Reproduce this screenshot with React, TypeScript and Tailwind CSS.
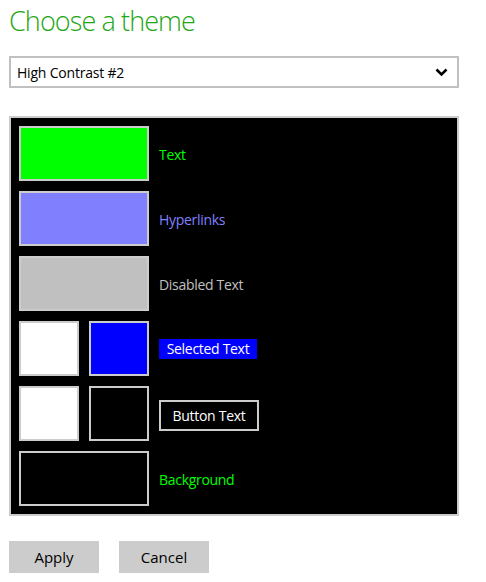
import React from "react";

const font = { fontFamily: '"Open Sans", "Noto Sans", sans-serif' };

export default function App() {
  return (
    <div className="w-[486px] h-[582px] bg-white relative" style={font}>
      <h1 className="absolute left-[9px] top-[3px] text-[27px] font-light text-[#1ea614] leading-[36px] tracking-[-0.9px]">
        Choose a theme
      </h1>

      <div className="px-[9px] pt-[56px]">
        {/* Dropdown */}
        <div className="w-[450px] h-[32px] border-2 border-[#c0c0c0] flex items-center justify-between pl-[6px] pr-[9px]">
          <span className="text-[14px] text-black tracking-[-0.2px]">High Contrast #2</span>
          <svg width="13" height="9" viewBox="0 0 13 9">
            <path d="M1.5 1.5 L6.5 6.5 L11.5 1.5" fill="none" stroke="#000" strokeWidth="2.6" />
          </svg>
        </div>

        {/* Preview panel */}
        <div className="mt-[28px] w-[450px] h-[400px] border-2 border-[#cccccc] bg-black p-[8px] flex flex-col gap-[10px] text-[14px] tracking-[-0.3px]">
          <div className="flex items-center h-[55px]">
            <div className="w-[130px] h-[55px] border-2 border-[#cccccc] bg-[#00ff00]" />
            <span className="ml-[10px] pt-[2px] text-[#00ff00]">Text</span>
          </div>
          <div className="flex items-center h-[55px]">
            <div className="w-[130px] h-[55px] border-2 border-[#cccccc] bg-[#8080ff]" />
            <span className="ml-[10px] pt-[2px] text-[#8080ff]">Hyperlinks</span>
          </div>
          <div className="flex items-center h-[55px]">
            <div className="w-[130px] h-[55px] border-2 border-[#cccccc] bg-[#c0c0c0]" />
            <span className="ml-[10px] pt-[2px] text-[#c0c0c0]">Disabled Text</span>
          </div>
          <div className="flex items-center h-[55px]">
            <div className="w-[60px] h-[55px] border-2 border-[#cccccc] bg-white" />
            <div className="ml-[10px] w-[60px] h-[55px] border-2 border-[#cccccc] bg-[#0000ff]" />
            <span className="ml-[10px] w-[98px] h-[20px] bg-[#0000ff] text-white leading-[20px] text-center">
              Selected Text
            </span>
          </div>
          <div className="flex items-center h-[55px]">
            <div className="w-[60px] h-[55px] border-2 border-[#cccccc] bg-white" />
            <div className="ml-[10px] w-[60px] h-[55px] border-2 border-[#cccccc] bg-black" />
            <span className="ml-[10px] mt-[3px] w-[100px] h-[31px] border-2 border-[#cccccc] text-white flex items-center justify-center">
              Button Text
            </span>
          </div>
          <div className="flex items-center h-[55px]">
            <div className="w-[130px] h-[55px] border-2 border-[#cccccc] bg-black" />
            <span className="ml-[10px] pt-[2px] text-[#00ff00]">Background</span>
          </div>
        </div>

        {/* Buttons */}
        <div className="mt-[25px] flex gap-[20px]">
          <button className="w-[90px] h-[32px] bg-[#cccccc] text-[15px] font-medium text-black">
            Apply
          </button>
          <button className="w-[90px] h-[32px] bg-[#cccccc] text-[15px] font-medium text-black">
            Cancel
          </button>
        </div>
      </div>
    </div>
  );
}
